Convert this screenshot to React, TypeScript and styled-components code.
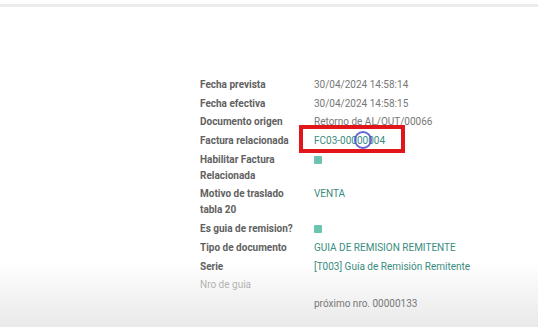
import styled, { createGlobalStyle } from 'styled-components';

const GlobalStyle = createGlobalStyle`
  html, body {
    margin: 0;
    padding: 0;
  }
  body {
    width: 538px;
    height: 327px;
    overflow: hidden;
    font-family: Roboto, "Liberation Sans", sans-serif;
    background: linear-gradient(to bottom, #ffffff 0, #ffffff 262px, #e9e9e9 327px);
  }
`;

type Field = {
  label: string;
  value?: string;
  kind?: 'text' | 'link' | 'check' | 'muted';
  highlight?: boolean;
};

const fields: Field[] = [
  { label: 'Fecha prevista', value: '30/04/2024 14:58:14' },
  { label: 'Fecha efectiva', value: '30/04/2024 14:58:15' },
  { label: 'Documento origen', value: 'Retorno de AL/OUT/00066' },
  { label: 'Factura relacionada', value: 'FC03-00000004', kind: 'link', highlight: true },
  { label: 'Habilitar Factura Relacionada', kind: 'check' },
  { label: 'Motivo de traslado tabla 20', value: 'VENTA', kind: 'link' },
  { label: 'Es guia de remision?', kind: 'check' },
  { label: 'Tipo de documento', value: 'GUIA DE REMISION REMITENTE', kind: 'link' },
  { label: 'Serie', value: '[T003] Guía de Remisión Remitente', kind: 'link' },
  { label: 'Nro de guia', kind: 'muted' },
];

export default function App() {
  return (
    <>
      <GlobalStyle />
      <Page>
        <TopBar />
        <Sheet>
          {fields.map((f) => (
            <Row key={f.label}>
              <Label $muted={f.kind === 'muted'}>{f.label}</Label>
              <Value $link={f.kind === 'link'}>
                {f.kind === 'check' ? <Check /> : f.value}
                {f.highlight && (
                  <>
                    <RedBox />
                    <Cursor />
                  </>
                )}
              </Value>
            </Row>
          ))}
          <Row>
            <Label />
            <Value>próximo nro. 00000133</Value>
          </Row>
        </Sheet>
      </Page>
    </>
  );
}

const Page = styled.div`
  display: flex;
  flex-direction: column;
  height: 327px;
`;

const TopBar = styled.div`
  margin-top: 4px;
  height: 3px;
  background: #ececec;
`;

const Sheet = styled.div`
  display: flex;
  flex-direction: column;
  gap: 2.7px;
  margin-top: 70px;
  margin-left: 200px;
  font-size: 10px;
  line-height: 16px;
`;

const Row = styled.div`
  display: grid;
  grid-template-columns: 114px 1fr;
`;

const Label = styled.div<{ $muted?: boolean }>`
  width: 100px;
  font-weight: ${(p) => (p.$muted ? 400 : 700)};
  color: ${(p) => (p.$muted ? '#b3b3b3' : '#616161')};
`;

const Value = styled.div<{ $link?: boolean }>`
  position: relative;
  color: ${(p) => (p.$link ? '#3a8c80' : '#777777')};
`;

const Check = styled.span`
  display: inline-block;
  width: 8px;
  height: 8px;
  margin-top: 4px;
  background: #6cc3b0;
  border-radius: 1px;
  vertical-align: top;
`;

const RedBox = styled.span`
  position: absolute;
  left: -15px;
  top: -8px;
  width: 106px;
  height: 28px;
  box-sizing: border-box;
  border: 4px solid #e0161b;
`;

const Cursor = styled.span`
  position: absolute;
  left: 40px;
  top: -2px;
  width: 18px;
  height: 18px;
  box-sizing: border-box;
  border: 2px solid rgba(70, 78, 205, 0.85);
  border-radius: 50%;
`;
